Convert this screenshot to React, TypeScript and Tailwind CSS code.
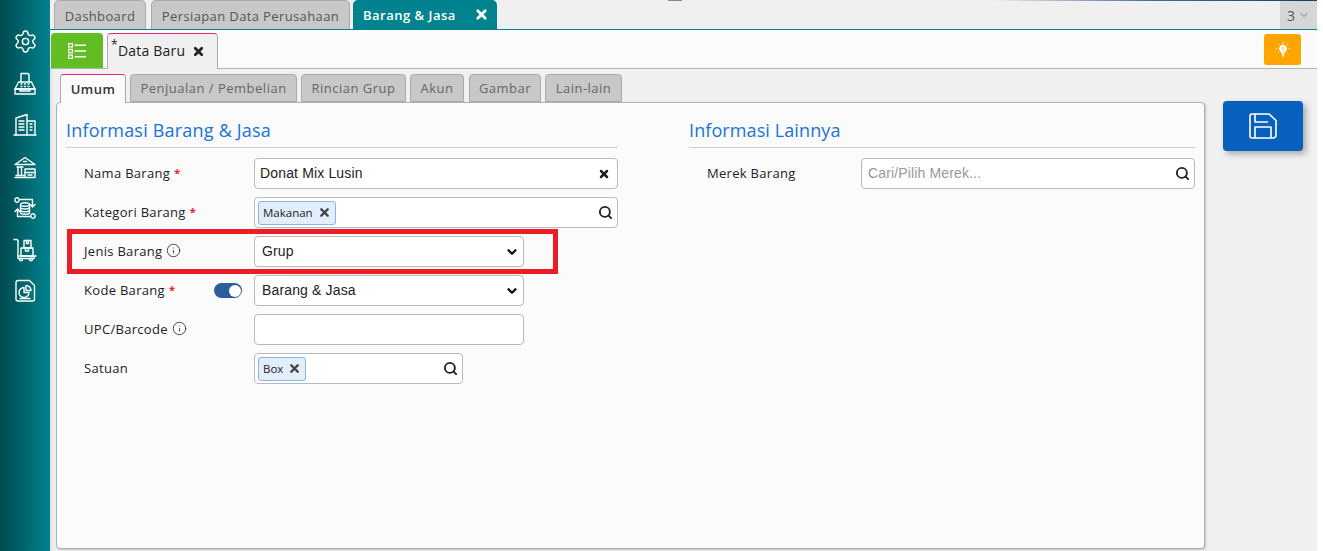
import type { ReactNode } from 'react';
import { ChevronDown, Search, Info, X, Settings } from 'lucide-react';

const font = "font-['Open_Sans',sans-serif]";

function TopTab({ label, active, className = '' }: { label: string; active?: boolean; className?: string }) {
  return active ? (
    <div className={`flex h-[29px] w-[144px] items-center justify-between whitespace-nowrap rounded-t-[5px] bg-[#00838f] pl-[10px] pr-[8px] pt-[3px] text-[13px] font-semibold tracking-[0.5px] text-white ${className}`}>
      {label}
      <X className="-mt-[3px] h-[15px] w-[15px]" strokeWidth={4.5} />
    </div>
  ) : (
    <div className={`flex h-[29px] items-center justify-center whitespace-nowrap rounded-t-[5px] border border-b-0 border-[#aaaaaa] bg-[#c8c8c8] pt-[3px] text-[13px] tracking-[0.38px] text-[#555555] ${className}`}>
      {label}
    </div>
  );
}

function InnerTab({ label, width, active }: { label: string; width: string; active?: boolean }) {
  return active ? (
    <div className={`relative z-10 -mb-px flex h-[29px] items-center justify-center whitespace-nowrap rounded-t-[4px] border border-b-0 border-[#aaaaaa] border-t-[#e6277f] bg-[#fbfbfb] pt-[2px] text-[13px] font-semibold tracking-[0.5px] text-[#333333] ${width}`}>
      {label}
    </div>
  ) : (
    <div className={`flex h-[28px] items-center justify-center whitespace-nowrap rounded-t-[4px] border border-[#aaaaaa] bg-[#c8c8c8] pt-[2px] text-[13px] tracking-[0.5px] text-[#666666] ${width}`}>
      {label}
    </div>
  );
}

function Label({ text, required, info }: { text: string; required?: boolean; info?: boolean }) {
  return (
    <div className="flex items-center gap-[4px] whitespace-nowrap text-[13px] tracking-[0.3px] text-[#222222]">
      {text}
      {required && <span className="text-[11px] font-bold text-[#ee2222]">*</span>}
      {info && <Info className="-mt-[2px] h-[15px] w-[15px] text-[#333333]" strokeWidth={1.4} />}
    </div>
  );
}

function Chip({ label }: { label: string }) {
  return (
    <span className="flex h-[24px] items-center gap-[5px] rounded-[3px] border border-[#8ab4e8] bg-[#e3eefc] px-[4px] text-[11.5px] text-[#222222]">
      {label}
      <X className="h-[13px] w-[13px] text-[#444444]" strokeWidth={4.5} />
    </span>
  );
}

function Box({ className, children }: { className: string; children?: ReactNode }) {
  return (
    <div className={`flex h-[31px] items-center justify-between rounded-[4px] border border-[#b9b9b9] bg-white ${className}`}>
      {children}
    </div>
  );
}

function SelectBox({ value }: { value: string }) {
  return (
    <Box className="w-[270px] pl-[7px] pr-[3px] text-[14px] text-[#222222]">
      <span className="font-['Liberation_Sans',sans-serif] tracking-[0.15px]">{value}</span>
      <ChevronDown className="mr-[1px] h-[14px] w-[14px] text-[#111111]" strokeWidth={4} />
    </Box>
  );
}

const SearchIcon = () => <Search className="mr-[4px] h-[15px] w-[15px] text-[#222222]" strokeWidth={3} />;

const sideSvg = { viewBox: '0 0 24 24', fill: 'none', stroke: 'currentColor', strokeWidth: 1.4, strokeLinejoin: 'round' as const, strokeLinecap: 'round' as const, className: 'h-[24px] w-[24px]' };

const FaxIcon = () => (
  <svg {...sideSvg}>
    <path d="M8 10V1.5h7l1 1V10" />
    <path d="M5.5 10h13l3.5 7H2z" />
    <path d="M2 17h20v5H2z" />
    <path d="M7 17v2h10v-2" />
    <path d="M8 12h1M11.5 12h1M15 12h1M8 14.5h1M11.5 14.5h1M15 14.5h1" />
  </svg>
);

const BuildingIcon = () => (
  <svg {...sideSvg}>
    <path d="M1 22h22" />
    <path d="M3 22V5l11-3.5V22" />
    <path d="M14 8h8v14" />
    <path d="M6 8h5M6 11h5M6 14h5M6 17h5" />
    <path d="M17 11h2M17 14h2M17 17h2" />
  </svg>
);

const BankIcon = () => (
  <svg {...sideSvg}>
    <path d="M2 9.5 12 2.5l10 7z" />
    <path d="M10.5 6.5h3" />
    <path d="M4 12h6M5 12v8M8.5 12v8" />
    <path d="M2 22.5h10M3 20.5h8" />
    <path d="M12 14h10v8.5H12z" />
    <path d="M12 17.5h10M15 20h4" />
  </svg>
);

const FlowIcon = () => (
  <svg {...sideSvg}>
    <ellipse cx="12" cy="8.5" rx="4.5" ry="1.8" />
    <path d="M7.5 8.5v8c0 1 2 1.8 4.5 1.8s4.5-.8 4.5-1.8v-8" />
    <path d="M7.5 11.2c0 1 2 1.8 4.5 1.8s4.5-.8 4.5-1.8M7.5 13.9c0 1 2 1.8 4.5 1.8s4.5-.8 4.5-1.8" />
    <circle cx="4" cy="4" r="2.2" strokeDasharray="1.6 0.7" />
    <circle cx="20" cy="20" r="2.2" strokeDasharray="1.6 0.7" />
    <path d="M7 3.5h12.5v7M17.5 8.5l2 2.5 2.5-2.5" />
    <path d="M17 20.5H4.5v-7M2 15.5l2.5-2.5 2 2.5" />
  </svg>
);

const TrolleyIcon = () => (
  <svg {...sideSvg}>
    <path d="M1 1.5h3l1 1v15.5h18" />
    <path d="M5 18v2.5h16V18" />
    <circle cx="8" cy="21.5" r="1.4" />
    <circle cx="18" cy="21.5" r="1.4" />
    <path d="M8 10h12v8H8z" />
    <path d="M11 2.5h7v7.5h-7z" />
    <path d="M13.5 2.5v3h2v-3M12.5 10v3h3v-3" />
  </svg>
);

const ReportIcon = () => (
  <svg {...sideSvg}>
    <path d="M5 1.5h11.5l5 5V20a2 2 0 0 1-2 2H5a2 2 0 0 1-2-2V3.5a2 2 0 0 1 2-2z" />
    <path d="M11 8.5a5 5 0 1 0 5 5h-5z" />
    <path d="M13 6.5a5 5 0 0 1 5 5h-5z" />
    <path d="M7 19.5h10" />
  </svg>
);

export default function App() {
  return (
    <div className={`${font} flex h-[551px] w-[1323px] overflow-hidden bg-white`}>
      {/* sidebar */}
      <aside className="flex w-[50px] shrink-0 flex-col items-center gap-[17.5px] bg-gradient-to-r from-[#004b50] to-[#00838f] pt-[29px] text-white">
        <Settings className="h-[25px] w-[25px]" strokeWidth={1.4} />
        <FaxIcon />
        <BuildingIcon />
        <BankIcon />
        <FlowIcon />
        <TrolleyIcon />
        <ReportIcon />
      </aside>

      <div className="flex w-[1267px] shrink-0 flex-col bg-[#f0f0f0]">
        {/* strip of the page behind, 1px high */}
        <div className="flex h-px shrink-0">
          <div className="ml-[618px] w-[14px] bg-[#8a8496]" />
          <div className="ml-[310px] w-[325px] bg-gradient-to-r from-[#f0f0f0] via-[#4a6a96] to-[#1d3a68]" />
        </div>

        {/* top tabs */}
        <div className="flex h-[29px] shrink-0 items-end border-b border-[#00838f] pl-[4px]">
          <TopTab label="Dashboard" className="w-[92px]" />
          <TopTab label="Persiapan Data Perusahaan" className="ml-[5px] w-[199px]" />
          <TopTab label="Barang & Jasa" active className="ml-[3px]" />
          <div className="ml-auto flex h-[28px] w-[37px] items-center justify-center gap-[3px] bg-[#d6d6d6] text-[14px] text-[#555555]">
            3
            <ChevronDown className="h-[12px] w-[12px]" strokeWidth={1.5} />
          </div>
        </div>

        {/* sub header */}
        <div className="flex h-[39px] shrink-0 items-end rounded-t-[4px] border-b border-[#b4b4b4] bg-[#fbfbfb]">
          <div className="ml-[1px] flex h-[35px] w-[52px] items-center justify-center rounded-t-[4px] bg-[#62bd25] text-white">
            <svg viewBox="0 0 18 16" className="h-[16px] w-[18px]" fill="none" stroke="currentColor" strokeWidth="1.2">
              <rect x="0.6" y="0.6" width="3.8" height="3.4" />
              <rect x="0.6" y="6.3" width="3.8" height="3.4" />
              <rect x="0.6" y="12" width="3.8" height="3.4" />
              <path d="M6.5 2.3H18M6.5 8H18M6.5 13.7H18" strokeWidth="1.6" />
            </svg>
          </div>
          <div className="relative z-10 -mb-px ml-[4px] flex h-[36px] w-[111px] items-center rounded-t-[4px] border border-b-0 border-[#aaaaaa] border-t-[#e6277f] bg-[#f0f0f0] pb-[2px] pl-[10px] text-[14px] tracking-[0.2px] text-[#222222]">
            <span className="absolute left-[3px] top-[2px] text-[12px]">*</span>
            Data Baru
            <X className="ml-[7px] mt-[2px] h-[13px] w-[13px]" strokeWidth={5} />
          </div>
          <div className="mb-[3px] ml-auto mr-[16px] flex h-[31px] w-[37px] items-center justify-center rounded-[3px] bg-[#ffa500] text-white">
            <svg viewBox="0 0 14 15" className="h-[15px] w-[14px]" fill="none" stroke="currentColor" strokeWidth="0.9">
              <path d="M7 3a3.6 3.6 0 0 0-2.2 6.4c.5.5.7 1 .7 1.6h3c0-.6.2-1.1.7-1.6A3.6 3.6 0 0 0 7 3z" fill="currentColor" />
              <path d="M5.6 12.3h2.8M6 13.9h2" strokeWidth="1.2" />
              <path d="M7 0v1.4M2 2l1 1M12 2l-1 1M0 6.6h1.4M14 6.6h-1.4M1.8 11l1-.8M12.2 11l-1-.8" />
              <path d="M7 4.8v3M7 8.6v.9" stroke="#ffa500" strokeWidth="1" />
            </svg>
          </div>
        </div>

        {/* form body */}
        <div className="flex min-h-0 flex-1 gap-[18px] pl-[6px] pr-[14px] pt-[5px] shadow-[inset_5px_0_4px_-3px_rgba(0,0,0,0.07)]">
          <div className="flex min-w-0 flex-1 flex-col">
            <div className="flex h-[28px] shrink-0 pl-[4px]">
              <InnerTab label="Umum" width="w-[66px]" active />
              <div className="ml-[4px]"><InnerTab label="Penjualan / Pembelian" width="w-[167px]" /></div>
              <div className="ml-[4px]"><InnerTab label="Rincian Grup" width="w-[105px]" /></div>
              <div className="ml-[4px]"><InnerTab label="Akun" width="w-[54px]" /></div>
              <div className="ml-[5px]"><InnerTab label="Gambar" width="w-[72px]" /></div>
              <div className="ml-[4px]"><InnerTab label="Lain-lain" width="w-[77px]" /></div>
            </div>

            <div className="mb-[2px] flex flex-1 gap-[71px] rounded-[4px] border border-[#b0b0b0] bg-[#fbfbfb] px-[9px] pt-[15px] shadow-[1px_1px_2px_rgba(0,0,0,0.2)]">
              {/* left column */}
              <section className="w-[552px] shrink-0">
                <h2 className="border-b border-[#c8cede] pb-[5px] text-[18px] leading-[24px] tracking-[0.2px] text-[#1a73d9]">
                  Informasi Barang &amp; Jasa
                </h2>
                <div className="relative mt-[10px] flex flex-col gap-[8px]">
                  <div className="flex items-center">
                    <div className="w-[188px] pl-[18px]"><Label text="Nama Barang" required /></div>
                    <Box className="flex-1 pl-[5px] pr-[7px] text-[14px] text-[#222222]">
                      <span className="font-['Liberation_Sans',sans-serif] tracking-[0.15px]">Donat Mix Lusin</span>
                      <X className="h-[12px] w-[12px]" strokeWidth={5} />
                    </Box>
                  </div>
                  <div className="flex items-center">
                    <div className="w-[188px] pl-[18px]"><Label text="Kategori Barang" required /></div>
                    <Box className="flex-1 pl-[3px]">
                      <Chip label="Makanan" />
                      <SearchIcon />
                    </Box>
                  </div>
                  <div className="flex items-center">
                    <div className="w-[188px] pl-[18px]"><Label text="Jenis Barang" info /></div>
                    <SelectBox value="Grup" />
                  </div>
                  <div className="flex items-center">
                    <div className="flex w-[188px] items-center justify-between pl-[18px] pr-[12px]">
                      <Label text="Kode Barang" required />
                      <span className="flex h-[15px] w-[28px] items-center justify-end rounded-full bg-[#2f5d9b] pr-[1px]">
                        <span className="h-[12px] w-[12px] rounded-full bg-white" />
                      </span>
                    </div>
                    <SelectBox value="Barang & Jasa" />
                  </div>
                  <div className="flex items-center">
                    <div className="w-[188px] pl-[18px]"><Label text="UPC/Barcode" info /></div>
                    <Box className="w-[270px]" />
                  </div>
                  <div className="flex items-center">
                    <div className="w-[188px] pl-[18px]"><Label text="Satuan" /></div>
                    <Box className="w-[209px] pl-[3px]">
                      <Chip label="Box" />
                      <SearchIcon />
                    </Box>
                  </div>
                  {/* highlight annotation */}
                  <div className="pointer-events-none absolute left-[1px] top-[71px] h-[45px] w-[491px] border-[5px] border-[#ee1c25]" />
                </div>
              </section>

              {/* right column */}
              <section className="min-w-0 flex-1">
                <h2 className="border-b border-[#c8cede] pb-[5px] text-[18px] leading-[24px] tracking-[0.1px] text-[#1a73d9]">
                  Informasi Lainnya
                </h2>
                <div className="mt-[10px] flex items-center">
                  <div className="w-[172px] pl-[18px]"><Label text="Merek Barang" /></div>
                  <Box className="flex-1 pl-[6px] text-[14px] text-[#999999]">
                    <span className="font-['Liberation_Sans',sans-serif] tracking-[0.15px]">Cari/Pilih Merek...</span>
                    <SearchIcon />
                  </Box>
                </div>
              </section>
            </div>
          </div>

          {/* save */}
          <div className="w-[80px] shrink-0 pt-[27px]">
            <button className="flex h-[50px] w-[80px] items-center justify-center rounded-[4px] bg-[#0860bd] text-white shadow-[3px_3px_6px_rgba(0,0,0,0.3)]">
              <svg viewBox="0 0 28 26" className="h-[26px] w-[28px]" fill="none" stroke="currentColor" strokeWidth="1.6" strokeLinejoin="round">
                <path d="M3 1h17l7 6.5V22a3 3 0 0 1-3 3H3a2 2 0 0 1-2-2V3a2 2 0 0 1 2-2z" />
                <path d="M6 1v8h13" />
                <path d="M6 25V14h16v11" />
              </svg>
            </button>
          </div>
        </div>
      </div>
    </div>
  );
}
